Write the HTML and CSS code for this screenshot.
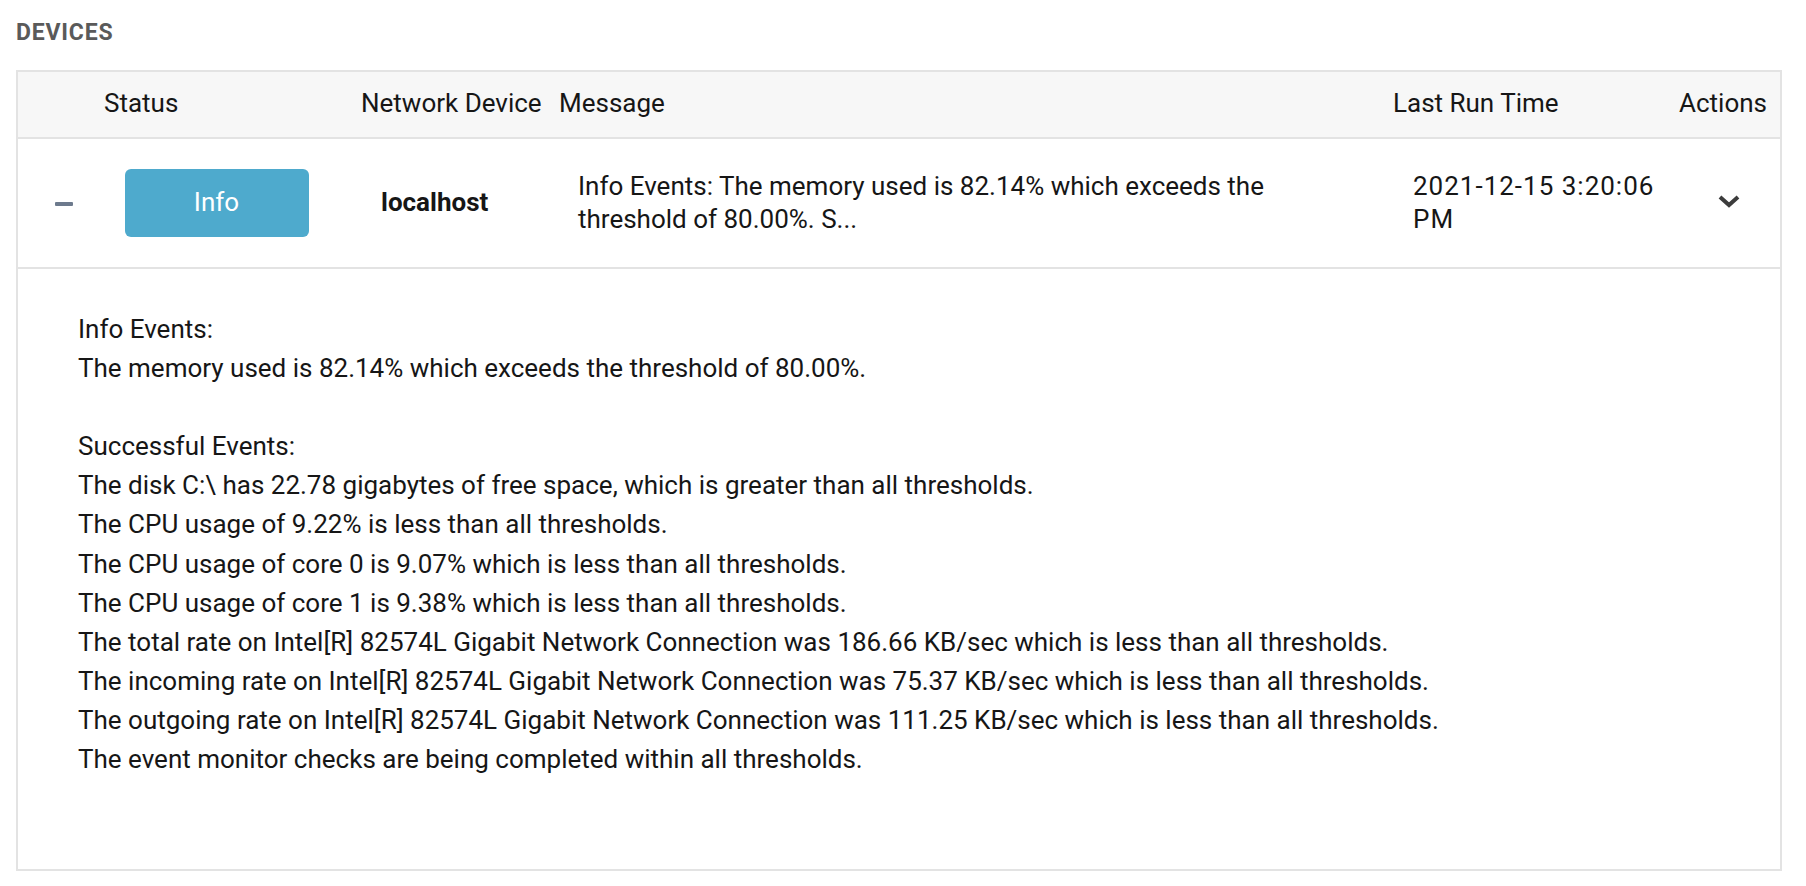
FILE: index.html
```html
<!DOCTYPE html>
<html lang="en">
<head>
<meta charset="UTF-8">
<meta name="viewport" content="width=device-width, initial-scale=1.0">
<title>Devices</title>
<link rel="stylesheet" href="styles.css">
</head>
<body>
<section class="devices">
  <h3 class="devices-title">Devices</h3>
  <div class="device-table">
    <div class="device-head">
      <div class="cell"></div>
      <div class="cell">Status</div>
      <div class="cell">Network Device</div>
      <div class="cell">Message</div>
      <div class="cell">Last Run Time</div>
      <div class="cell">Actions</div>
    </div>
    <div class="device-row">
      <div class="cell cell-toggle"><span class="collapse-bar"></span></div>
      <div class="cell cell-status"><span class="status-btn">Info</span></div>
      <div class="cell cell-device">localhost</div>
      <div class="cell cell-message">Info Events: The memory used is 82.14% which exceeds the threshold of 80.00%. S...</div>
      <div class="cell cell-time">2021-12-15 3:20:06 PM</div>
      <div class="cell cell-actions">
        <svg class="chevron" width="24" height="14" viewBox="0 0 24 14"><polyline points="3,3 12,11 21,3" fill="none" stroke="#3c3c3c" stroke-width="4" stroke-linejoin="miter"/></svg>
      </div>
    </div>
    <div class="device-detail">
      <p>Info Events:<br>The memory used is 82.14% which exceeds the threshold of 80.00%.</p>
      <p>Successful Events:<br>
      The disk C:\ has 22.78 gigabytes of free space, which is greater than all thresholds.<br>
      The CPU usage of 9.22% is less than all thresholds.<br>
      The CPU usage of core 0 is 9.07% which is less than all thresholds.<br>
      The CPU usage of core 1 is 9.38% which is less than all thresholds.<br>
      The total rate on Intel[R] 82574L Gigabit Network Connection was 186.66 KB/sec which is less than all thresholds.<br>
      The incoming rate on Intel[R] 82574L Gigabit Network Connection was 75.37 KB/sec which is less than all thresholds.<br>
      The outgoing rate on Intel[R] 82574L Gigabit Network Connection was 111.25 KB/sec which is less than all thresholds.<br>
      The event monitor checks are being completed within all thresholds.</p>
    </div>
  </div>
</section>
</body>
</html>
```

FILE: styles.css
```css
body { margin: 0; font-family: Roboto, "Liberation Sans", sans-serif; color: #161616; background: #fff; }
.devices { padding: 21px 24px 0 16px; }
.devices-title { margin: 0 0 25px; font-size: 23px; line-height: 24px; font-weight: 700; letter-spacing: 0.8px; text-transform: uppercase; color: #5a5a5a; }

.device-table { width: 1766px; box-sizing: border-box; border: 2px solid #e3e3e3; }
.device-head, .device-row { display: grid; grid-template-columns: 70px 257px 198px 834px 286px 117px; }

.device-head { height: 65px; background: #f7f7f7; border-bottom: 2px solid #e3e3e3; font-size: 26px; line-height: 33px; }
.device-head .cell { display: flex; align-items: center; padding: 0 0 3px 16px; }

.device-row { height: 128px; border-bottom: 2px solid #e3e3e3; font-size: 26px; line-height: 33.3px; }
.device-row .cell { display: flex; align-items: center; }

.cell-toggle { padding-left: 37px; }
.collapse-bar { display: block; width: 18px; height: 4px; border-radius: 1px; background: #6d7a8d; margin-top: 1px; }

.cell-status { justify-content: center; padding: 0 16px; }
.status-btn { display: flex; align-items: center; justify-content: center; width: 184px; height: 68px; border-radius: 6px; background: #4eaacd; color: #fff; }

.cell-device { padding-left: 36px; font-weight: 700; }
.cell-message { padding: 0 16px 0 35px; }
.cell-time { padding-left: 36px; letter-spacing: 1px; }
.cell-actions { padding-left: 54px; }
.chevron { display: block; margin-top: -4px; }

.device-detail { height: 600px; box-sizing: border-box; padding: 41px 0 0 60px; font-size: 26px; line-height: 39.1px; }
.device-detail p { margin: 0 0 39.1px; }
```
